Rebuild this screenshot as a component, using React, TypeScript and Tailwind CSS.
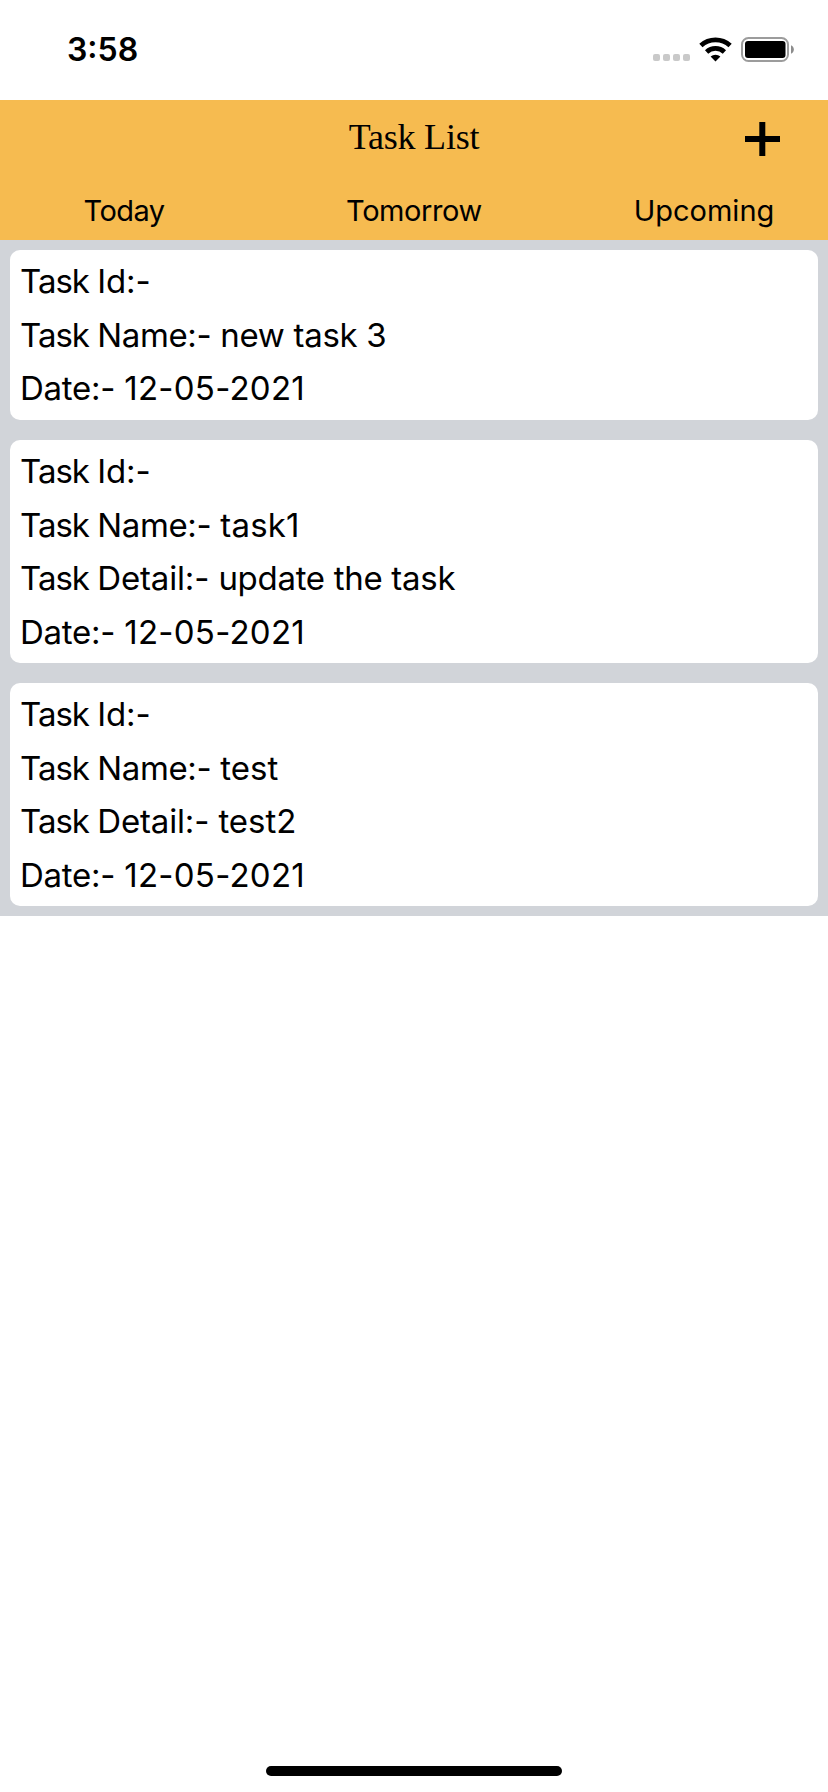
import React from "react";

type Run = { text: string; tracking: string };

const TASK: Run = { text: "Task ", tracking: "tracking-[-1px]" };
const ID: Run[] = [TASK, { text: "Id:-", tracking: "tracking-[-0.1px]" }];
const NAME: Run[] = [TASK, { text: "Name:- ", tracking: "tracking-[-0.35px]" }];
const DETAIL: Run[] = [TASK, { text: "Detail:- ", tracking: "tracking-[-0.15px]" }];
const DATE: Run[] = [
  { text: "Date:- ", tracking: "tracking-[-0.25px]" },
  { text: "12-05-2021", tracking: "tracking-[0.25px]" },
];

const cards: { height: string; lines: Run[][] }[] = [
  {
    height: "h-[170px]",
    lines: [ID, [...NAME, { text: "new task 3", tracking: "tracking-[-0.3px]" }], DATE],
  },
  {
    height: "h-[223px]",
    lines: [
      ID,
      [...NAME, { text: "task1", tracking: "tracking-[0.2px]" }],
      [...DETAIL, { text: "update the task", tracking: "tracking-[-0.3px]" }],
      DATE,
    ],
  },
  {
    height: "h-[223px]",
    lines: [
      ID,
      [...NAME, { text: "test", tracking: "tracking-normal" }],
      [...DETAIL, { text: "test2", tracking: "tracking-normal" }],
      DATE,
    ],
  },
];

function StatusBar() {
  return (
    <div className="flex h-[100px] items-start justify-between pl-[67px] pr-[34px]">
      <span className="pt-[30px] text-[32px] leading-[40px] font-semibold tracking-[0px]">3:58</span>
      <svg className="mt-[34px]" width="144" height="32" viewBox="650 34 144 32">
        <g fill="#c9c9c9">
          <rect x="653" y="54" width="7" height="7" rx="2" />
          <rect x="663" y="54" width="7" height="7" rx="2" />
          <rect x="673" y="54" width="7" height="7" rx="2" />
          <rect x="683" y="54" width="7" height="7" rx="2" />
        </g>
        <g fill="none" stroke="#000" strokeWidth="4.8">
          <path d="M700.9 45.5a21.6 21.6 0 0 1 29.2 0" />
          <path d="M706.6 51.9a13.200 13.200 0 0 1 17.8 0" />
        </g>
        <path d="M715.5 61.6l-4.900-5a7.200 7.200 0 0 1 9.800 0z" fill="#000" />
        <rect x="742" y="38" width="46" height="23" rx="6.5" fill="none" stroke="#9c9c9c" strokeWidth="2" />
        <rect x="745" y="41" width="40.5" height="17" rx="3" fill="#000" />
        <path d="M791 45.3c3.8 1.3 3.8 7.2 0 8.5z" fill="#8c8c8c" />
      </svg>
    </div>
  );
}

function Header() {
  return (
    <header className="flex h-[140px] flex-col bg-[#f6bb50]">
      <div className="grid h-[77px] grid-cols-[248px_1fr_248px]">
        <div />
        <h1 className="pt-[15px] text-center font-['Liberation_Serif',serif] text-[36px] leading-[44px] font-normal tracking-[-0.2px]">
          Task List
        </h1>
        <svg className="mt-[22px] ml-[165px]" width="35" height="34" viewBox="0 0 35 34">
          <path d="M14.3 0h6v14.1H35v6H20.300v14h-6v-14H0v-6h14.300z" fill="#000" />
        </svg>
      </div>
      <nav className="flex justify-between text-[29px] leading-[40px]">
        <span className="w-[248px] pt-[14px] text-center tracking-[-0.6px]">Today</span>
        <span className="w-[248px] pt-[14px] text-center tracking-[-0.4px]">Tomorrow</span>
        <span className="w-[248px] pt-[14px] text-center">Upcoming</span>
      </nav>
    </header>
  );
}

export default function App() {
  return (
    <div className="flex h-[1792px] w-[828px] flex-col bg-white font-[Inter,sans-serif] text-black">
      <StatusBar />
      <Header />
      <main className="bg-[#d1d4d9]">
        {cards.map((card, i) => (
          <div key={i} className="p-[10px]">
            <div className={`rounded-[10px] bg-white pt-[5px] pl-[10px] ${card.height}`}>
              {card.lines.map((line, j) => (
                <p key={j} className="text-[33px] leading-[53.6px] whitespace-pre">
                  {line.map((run, k) => (
                    <span key={k} className={run.tracking}>
                      {run.text}
                    </span>
                  ))}
                </p>
              ))}
            </div>
          </div>
        ))}
      </main>
      <div className="mx-auto mt-auto mb-[16px] h-[10px] w-[296px] rounded-full bg-black" />
    </div>
  );
}
